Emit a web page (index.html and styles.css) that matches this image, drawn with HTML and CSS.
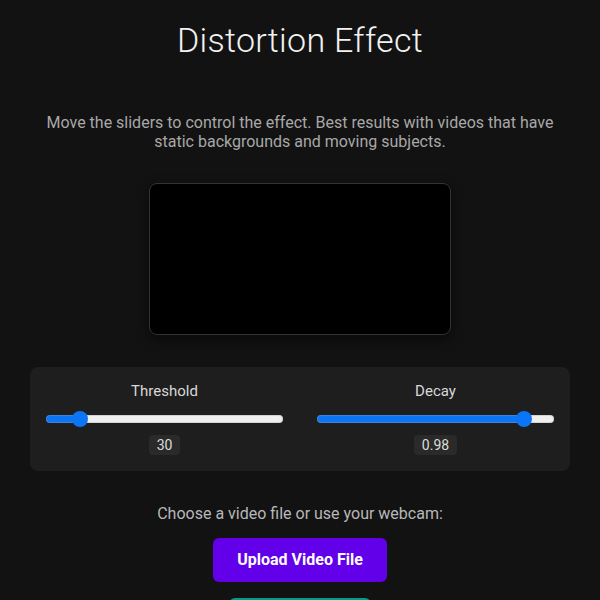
FILE: index.html
```html
<!DOCTYPE html>
<html lang="en">
<head>
<meta charset="utf-8">
<title>Distortion Effect</title>
<link rel="stylesheet" href="styles.css">
</head>
<body>
<main class="app">
  <h1 class="title">Distortion Effect</h1>
  <p class="intro">Move the sliders to control the effect. Best results with videos that have static backgrounds and moving subjects.</p>
  <div class="stage"><canvas class="canvas" width="300" height="150"></canvas></div>
  <section class="controls">
    <div class="control">
      <label class="control-label" for="threshold">Threshold</label>
      <input class="slider" id="threshold" type="range" min="0" max="255" value="30" style="--pct: 11.8%">
      <span class="value">30</span>
    </div>
    <div class="control">
      <label class="control-label" for="decay">Decay</label>
      <input class="slider" id="decay" type="range" min="0.8" max="1" step="0.01" value="0.98" style="--pct: 90%">
      <span class="value">0.98</span>
    </div>
  </section>
  <p class="choose">Choose a video file or use your webcam:</p>
  <div class="actions">
    <button class="btn btn-upload" type="button">Upload Video File</button>
    <button class="btn btn-webcam" type="button">Use Webcam</button>
  </div>
</main>
</body>
</html>
```
FILE: styles.css
```css
* { box-sizing: border-box; }
html, body { margin: 0; padding: 0; }
body {
  background: #121212;
  color: #e0e0e0;
  font-family: Roboto, "Noto Sans", "Liberation Sans", sans-serif;
}
.app {
  width: 600px;
  margin: 0 auto;
  padding: 20px 30px 30px;
  display: flex;
  flex-direction: column;
  align-items: center;
}
.title {
  margin: 0;
  font-size: 34px;
  font-weight: 300;
  color: #f2f2f2;
  line-height: 40px;
  letter-spacing: 0.3px;
}
.intro {
  margin: 53px 0 0;
  font-size: 16px;
  line-height: 19px;
  color: #a8a8a8;
  text-align: center;
}
.stage {
  margin-top: 32px;
  width: 302px;
  height: 152px;
  border: 1px solid #333;
  border-radius: 8px;
  background: #000;
  overflow: hidden;
  box-shadow: 0 4px 12px rgba(0,0,0,0.5);
}
.canvas { display: block; width: 300px; height: 150px; }
.controls {
  margin-top: 32px;
  width: 540px;
  background: #1e1e1e;
  border-radius: 8px;
  padding: 15px 16px 16px;
  display: grid;
  grid-template-columns: 1fr 1fr;
  column-gap: 34px;
}
.control {
  display: flex;
  flex-direction: column;
  align-items: center;
}
.control-label {
  font-size: 15px;
  line-height: 18px;
  color: #d8d8d8;
}
.slider {
  -webkit-appearance: none;
  appearance: none;
  width: 100%;
  height: 16px;
  margin: 11px 0 0;
  background: transparent;
}
.slider::-webkit-slider-runnable-track {
  height: 8px;
  border-radius: 4px;
  background: linear-gradient(to right, #0b75f5 0, #0b75f5 var(--pct), #efefef var(--pct), #efefef 100%);
  box-shadow: inset 0 0 0 1px rgba(160,160,160,0.35);
}
.slider::-webkit-slider-thumb {
  -webkit-appearance: none;
  appearance: none;
  width: 16px;
  height: 16px;
  margin-top: -4px;
  border-radius: 50%;
  background: #0b75f5;
  border: none;
}
.value {
  margin-top: 8px;
  font-size: 14px;
  line-height: 16px;
  padding: 2px 8px;
  border-radius: 4px;
  background: #2a2a2a;
  color: #dcdcdc;
}
.choose {
  margin: 33px 0 0;
  font-size: 16px;
  line-height: 19px;
  color: #b8b8b8;
}
.actions {
  margin-top: 15px;
  display: flex;
  flex-direction: column;
  align-items: center;
  gap: 16px;
}
.btn {
  border: none;
  border-radius: 6px;
  padding: 12px 24px;
  font-family: Roboto, "Noto Sans", "Liberation Sans", sans-serif;
  font-size: 16px;
  font-weight: 700;
  line-height: 20px;
  color: #fff;
  cursor: pointer;
}
.btn-upload { background: #6200ea; }
.btn-webcam { background: #019d88; }
```
